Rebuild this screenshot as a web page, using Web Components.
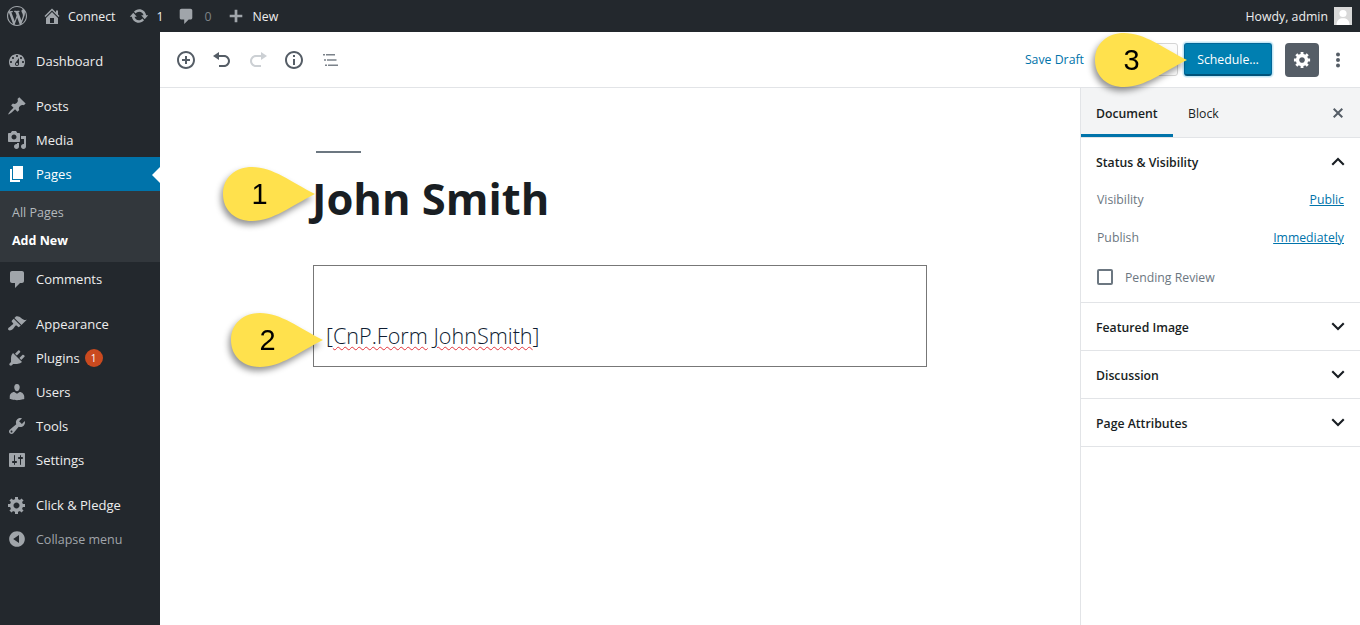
<!DOCTYPE html>
<html lang="en"><head><meta charset="utf-8"><title>Edit Page</title>
<style>
html,body{margin:0;height:625px;overflow:hidden;background:#fff;font-family:"Open Sans","Noto Sans",sans-serif}
#app{display:grid;grid-template-columns:160px 1fr;grid-template-rows:32px 1fr;height:625px;position:relative}
wp-adminbar{grid-column:1/3}
</style></head><body>
<div id="app">
<wp-adminbar></wp-adminbar>
<wp-sidemenu></wp-sidemenu>
<wp-editor></wp-editor>
<wp-callout n="1" style="left:223px;top:167px"></wp-callout>
<wp-callout n="2" style="left:231px;top:313px"></wp-callout>
<wp-callout n="3" style="left:1095px;top:33px"></wp-callout>
</div>
<script>
const P={
wp:"M20 10c0-5.51-4.49-10-10-10C4.48 0 0 4.49 0 10c0 5.52 4.48 10 10 10 5.51 0 10-4.48 10-10zM7.78 15.37L4.37 6.22c.55-.02 1.17-.08 1.17-.08.5-.06.44-1.13-.06-1.11 0 0-1.45.11-2.37.11-.18 0-.37 0-.58-.01C4.12 2.69 6.87 1.11 10 1.11c2.33 0 4.45.87 6.05 2.34-.68-.11-1.65.39-1.65 1.58 0 .74.45 1.36.9 2.1.35.61.55 1.36.55 2.46 0 1.49-1.4 5-1.4 5l-3.03-8.37c.54-.02.82-.17.82-.17.5-.05.44-1.25-.06-1.22 0 0-1.44.12-2.38.12-.87 0-2.33-.12-2.33-.12-.5-.03-.56 1.2-.06 1.22l.92.08 1.26 3.41zM17.41 10c.24-.64.74-1.87.43-4.25.7 1.29 1.05 2.71 1.05 4.25 0 3.29-1.73 6.24-4.4 7.78.97-2.59 1.94-5.2 2.92-7.78zM6.1 18.09C3.12 16.65 1.11 13.53 1.11 10c0-1.3.23-2.48.72-3.59C3.25 10.3 4.67 14.2 6.1 18.09zm4.03-6.63l2.58 6.98c-.86.29-1.76.45-2.71.45-.79 0-1.57-.11-2.29-.33.81-2.38 1.62-4.74 2.42-7.1z",
home:"M16 8.5l1.53 1.53-1.06 1.06L10 4.62l-6.47 6.47-1.06-1.06L10 2.5l4 4v-2h2v4zm-6-2.46l6 5.99V18H4v-5.97zM12 17v-5H8v5h4z",
update:"M10.2 3.28c3.53 0 6.43 2.61 6.92 6h2.08l-3.5 4-3.5-4h2.32c-.45-1.97-2.21-3.45-4.32-3.45-1.45 0-2.73.71-3.54 1.78L4.95 5.66C6.23 4.2 8.11 3.28 10.2 3.28zm-.4 13.44c-3.52 0-6.43-2.61-6.92-6H.8l3.5-4c1.17 1.33 2.33 2.67 3.5 4H5.48c.45 1.97 2.21 3.45 4.32 3.45 1.45 0 2.73-.71 3.54-1.78l1.71 1.95c-1.28 1.46-3.15 2.38-5.25 2.38z",
comment:"M5 2h10c1.1 0 2 .9 2 2v8c0 1.1-.9 2-2 2h-2l-5 5v-5H5c-1.1 0-2-.9-2-2V4c0-1.1.9-2 2-2z",
plus:"M17 8.5v3h-5.5V17h-3v-5.5H3v-3h5.5V3h3v5.500z",
dashboard:"M3.76 16h12.48c1.1-1.37 1.76-3.11 1.76-5 0-4.42-3.58-8-8-8s-8 3.58-8 8c0 1.89.66 3.63 1.76 5zM10 4c.55 0 1 .45 1 1s-.45 1-1 1-1-.45-1-1 .45-1 1-1zM6 6c.55 0 1 .45 1 1s-.45 1-1 1-1-.45-1-1 .45-1 1-1zm8 0c.55 0 1 .45 1 1s-.45 1-1 1-1-.45-1-1 .45-1 1-1zm-5.37 5.55L12 7v6c0 1.1-.9 2-2 2s-2-.9-2-2c0-.57.24-1.08.63-1.45zM4 10c.55 0 1 .45 1 1s-.45 1-1 1-1-.45-1-1 .45-1 1-1zm12 0c.55 0 1 .45 1 1s-.45 1-1 1-1-.45-1-1 .45-1 1-1zm-5 3c0-.55-.45-1-1-1s-1 .45-1 1 .45 1 1 1 1-.45 1-1z",
pin:"M10.44 3.02l1.82-1.82 6.36 6.35-1.83 1.82c-1.05-.68-2.48-.57-3.41.36l-.75.75c-.92.93-1.04 2.35-.35 3.41l-1.83 1.82-2.41-2.41-2.8 2.79c-.42.42-3.38 2.71-3.8 2.29s1.86-3.39 2.28-3.81l2.79-2.79L4.1 9.36l1.83-1.82c1.05.69 2.48.57 3.4-.36l.75-.75c.93-.92 1.05-2.35.36-3.41z",
media:"M13 11V4c0-.55-.45-1-1-1h-1.67L9 1H5L3.67 3H2c-.55 0-1 .45-1 1v7c0 .55.45 1 1 1h10c.55 0 1-.45 1-1zM7 4.500c1.38 0 2.500 1.120 2.500 2.500S8.380 9.500 7 9.500 4.500 8.380 4.500 7 5.620 4.500 7 4.500zM14 6h5v10.500c0 1.380-1.120 2.500-2.500 2.500S14 17.880 14 16.500s1.120-2.500 2.500-2.500c.17 0 .34.02.5.05V9h-3V6zm-4 8.050V13h2v3.500c0 1.380-1.120 2.500-2.500 2.500S7 17.880 7 16.500 8.120 14 9.500 14c.17 0 .34.02.5.05z",
page:"M6 15V2h10v13H6zm-1 1h8v2H3V5h2v11z",
appearance:"M14.48 11.06L7.41 3.99l1.5-1.5c.5-.56 2.3-.47 3.51.32 1.21.8 1.43 1.28 2.91 2.1 1.18.64 2.45 1.26 4.45.85zm-.71.71L6.7 4.7 4.93 6.47c-.39.39-.39 1.02 0 1.41l1.06 1.06c.39.39.39 1.03 0 1.42-.6.6-1.43 1.11-2.21 1.69-.35.26-.7.53-1.01.84C1.43 13.23.4 14.91 1.53 16.04c1.1 1.1 3.28.12 4.41-1.01.3-.3.57-.66.84-1.01.58-.78 1.09-1.61 1.69-2.21.39-.39 1.02-.39 1.41 0l1.06 1.06c.39.39 1.02.39 1.41 0z",
plugins:"M13.11 4.36L9.87 7.6 8 5.73l3.24-3.24c.35-.34 1.05-.2 1.56.32.52.51.66 1.21.31 1.55zm-8 1.77l.91-1.12 9.01 9.01-1.19.84c-.71.71-2.63 1.16-3.82 1.16H6.14L4.9 17.26c-.59.59-1.54.59-2.12 0-.59-.58-.59-1.53 0-2.12l1.24-1.24v-3.88c0-1.13.4-3.19 1.09-3.89zm7.26 3.97l3.24-3.24c.34-.35 1.04-.21 1.55.31.52.51.66 1.21.31 1.55l-3.24 3.25z",
users:"M10 9.25c-2.27 0-2.73-3.44-2.73-3.44C7 4.02 7.82 2 9.97 2c2.16 0 2.98 2.02 2.71 3.81 0 0-.41 3.44-2.68 3.44zm0 2.57L12.72 10c2.39 0 4.52 2.33 4.52 4.53v2.49s-3.65 1.13-7.24 1.13c-3.65 0-7.24-1.13-7.24-1.13v-2.49c0-2.25 1.94-4.48 4.47-4.48z",
tools:"M16.68 9.77c-1.34 1.34-3.3 1.67-4.95.99l-5.41 6.52c-.99.99-2.59.99-3.58 0s-.99-2.59 0-3.57l6.52-5.42c-.68-1.65-.35-3.61.99-4.95 1.28-1.28 3.12-1.62 4.72-1.06l-2.89 2.89 2.82 2.82 2.86-2.87c.53 1.58.18 3.39-1.08 4.65zM3.81 16.21c.4.39 1.04.39 1.43 0 .4-.4.4-1.04 0-1.43-.39-.4-1.03-.4-1.43 0-.39.39-.39 1.03 0 1.43z",
settings:"M18 16V4c0-.55-.45-1-1-1H3c-.55 0-1 .45-1 1v12c0 .55.45 1 1 1h14c.55 0 1-.45 1-1zM8 11h1c.55 0 1 .45 1 1s-.45 1-1 1H8v1.5c0 .28-.22.5-.5.5s-.5-.22-.5-.5V13H6c-.55 0-1-.45-1-1s.45-1 1-1h1V5.5c0-.28.22-.5.5-.5s.5.22.5.5V11zm5-2h-1c-.55 0-1-.45-1-1s.45-1 1-1h1V5.5c0-.28.22-.5.5-.5s.5.22.5.5V7h1c.55 0 1 .45 1 1s-.45 1-1 1h-1v5.5c0 .28-.22.5-.5.5s-.5-.22-.5-.5V9z",
gear:"M18 12h-2.18c-.17.7-.44 1.35-.81 1.93l1.54 1.54-2.1 2.1-1.54-1.54c-.58.36-1.23.63-1.91.79V19H8v-2.18c-.68-.16-1.33-.43-1.91-.79l-1.54 1.54-2.12-2.12 1.54-1.54c-.36-.58-.63-1.23-.79-1.91H1V9.03h2.17c.16-.7.44-1.35.8-1.94L2.43 5.55l2.1-2.1 1.54 1.54c.58-.37 1.24-.64 1.93-.81V2h3v2.18c.68.16 1.33.43 1.91.79l1.54-1.54 2.12 2.12-1.54 1.54c.36.59.64 1.24.8 1.94H18V12zm-8.5 1.5c1.66 0 3-1.34 3-3s-1.34-3-3-3-3 1.34-3 3 1.34 3 3 3z",
collapse:"M10 2.16c4.33 0 7.84 3.51 7.84 7.84s-3.51 7.84-7.84 7.84S2.16 14.33 2.16 10 5.71 2.16 10 2.16zm2 11.72V6.12L6.18 9.97z",
insert:"M10 1c-5 0-9 4-9 9s4 9 9 9 9-4 9-9-4-9-9-9zm0 16c-3.9 0-7-3.1-7-7s3.1-7 7-7 7 3.1 7 7-3.1 7-7 7zm1-11H9v3H6v2h3v3h2v-3h3V9h-3V6z",
undo:"M12 5H7V2L1 6l6 4V7h5c2.2 0 4 1.8 4 4s-1.8 4-4 4H7v2h5c3.3 0 6-2.7 6-6s-2.7-6-6-6z",
redo:"M8 5h5V2l6 4-6 4V7H8c-2.2 0-4 1.8-4 4s1.8 4 4 4h5v2H8c-3.3 0-6-2.7-6-6s2.7-6 6-6z",
info:"M10 1c-5 0-9 4-9 9s4 9 9 9 9-4 9-9-4-9-9-9zm0 16c-3.9 0-7-3.1-7-7s3.1-7 7-7 7 3.1 7 7-3.1 7-7 7zM9 9h2v6H9zm0-4h2v2H9z",
toc:"M3 4h2v1.600H3zM6 4h9v1.600H6zM4 9.200h2v1.600H4zM7 9.200h9.500v1.600H7zM5 14.400h2v1.600H5zM8 14.400h10v1.600H8z",
close:"M15 6.4L13.6 5 10 8.6 6.4 5 5 6.4 8.6 10 5 13.6 6.4 15 10 11.4 13.6 15 15 13.600 11.400 10z",
up:"M5 13.500l-1.500-1.500L10 5.500l6.500 6.500-1.500 1.500-5-5z",
down:"M5 5.500L3.500 7l6.500 6.500L16.500 7 15 5.500l-5 5z",
dots:"M10 2.500a2 2 0 1 1 0 4 2 2 0 0 1 0-4zm0 5.500a2 2 0 1 1 0 4 2 2 0 0 1 0-4zm0 5.500a2 2 0 1 1 0 4 2 2 0 0 1 0-4z"
};
const ic=(n,s=20,c="currentColor")=>`<svg width="${s}" height="${s}" viewBox="0 0 20 20" fill="${c}" style="display:block;flex:none"><path d="${P[n]}"/></svg>`;
const FONT=`"Open Sans","Noto Sans",sans-serif`;
function def(tag,html){customElements.define(tag,class extends HTMLElement{constructor(){super();const r=this.attachShadow({mode:"open"});if(typeof html!=="function")r.innerHTML=html;}connectedCallback(){if(typeof html==="function")this.shadowRoot.innerHTML=html(this);}});}

def("wp-adminbar",`<style>
:host{display:flex;align-items:center;height:32px;background:#23282d;color:#eee;font:12.300px/30px ${FONT};padding-right:8px;box-sizing:border-box}
.i{display:flex;align-items:center;color:#a0a5aa}
.t,.dim{padding-top:2px}
.t{color:#eee}.dim{color:#7d8286}
.av{width:18px;height:18px;background:#d8d8d8;margin-left:6px;overflow:hidden}
.sp{flex:1}
</style>
<div class="i" style="margin-left:7px">${ic("wp",20)}</div>
<div class="i" style="margin-left:15px">${ic("home",20)}</div><span class="t" style="margin-left:6px">Connect</span>
<div class="i" style="margin-left:14px">${ic("update",20)}</div><span class="t" style="margin-left:7px">1</span>
<div class="i" style="margin-left:14px">${ic("comment",18)}</div><span class="dim" style="margin-left:9px">0</span>
<div class="i" style="margin-left:16px">${ic("plus",18)}</div><span class="t" style="margin-left:7px">New</span>
<span class="sp"></span><span class="t">Howdy, admin</span>
<div class="av"><svg width="18" height="18" viewBox="0 0 18 18" style="display:block"><circle cx="9" cy="6.500" r="3.600" fill="#fff"/><path d="M2.500 18c0-5 3-6.800 6.500-6.800s6.500 1.800 6.500 6.800z" fill="#fff"/></svg></div>`);

def("wp-menu-item",h=>{const a=h.hasAttribute("active"),dim=h.hasAttribute("dim"),b=h.getAttribute("badge");return `<style>
:host{display:flex;align-items:center;height:34px;position:relative;background:${a?"#0073aa":"transparent"};color:${a?"#fff":dim?"#a0a5aa":"#eee"};font:${dim?"12.500px":"13px"}/18px ${FONT};margin-top:${h.hasAttribute("sep")?"11px":"0"}}
.ic{width:36px;padding-left:7px;box-sizing:border-box;color:${a?"#fff":"#a0a5aa"};flex:none}
.tx{${dim?"padding-top:1px":""}}
.b{display:inline-flex;width:18px;height:18px;border-radius:50%;background:#ca4a1f;color:#fff;font-size:10px;line-height:18px;justify-content:center;margin-left:5px}
.ar{position:absolute;right:0;top:10px;border:8px solid transparent;border-right-color:#fff;border-left:0}
</style><div class="ic">${ic(h.getAttribute("icon"),20)}</div><span class="tx"><slot></slot></span>${b?`<span class="b">${b}</span>`:""}${a?'<i class="ar"></i>':""}`});

def("wp-submenu",`<style>
:host{display:flex;flex-direction:column;background:#32373c;height:71px;box-sizing:border-box;padding:8px 0 0 12px;font:12.500px/28px ${FONT};color:#b4b9be}
.on{color:#fff;font-weight:700}
</style><span>All Pages</span><span class="on">Add New</span>`);

def("wp-sidemenu",`<style>:host{display:block;background:#23282d;padding-top:12px}</style><slot></slot>`);
document.querySelector("wp-sidemenu").innerHTML=[
["dashboard","Dashboard"],["pin","Posts",1],["media","Media"],["page","Pages",0,"active"],"sub",["comment","Comments"],["appearance","Appearance",1],["plugins","Plugins",0,'badge="1"'],["users","Users"],["tools","Tools"],["settings","Settings"],["gear","Click &amp; Pledge",1],["collapse","Collapse menu",0,"dim"]
].map(x=>x==="sub"?"<wp-submenu></wp-submenu>":`<wp-menu-item icon="${x[0]}" ${x[2]?"sep":""} ${x[3]||""}>${x[1]}</wp-menu-item>`).join("");

def("wp-toolbar",`<style>
:host{display:flex;align-items:center;height:56px;box-sizing:border-box;border-bottom:1px solid #e2e4e7;background:#fff;padding-left:8px;padding-right:12px;font:12.300px ${FONT}}
.b{width:36px;height:36px;display:flex;align-items:center;justify-content:center;color:#555d66}
.off{color:#ccd0d4}
.lt{color:#7b828a}
.sp{flex:1}
.save{color:#0073aa;margin-right:44px}
.prev{width:50px;height:33px;box-sizing:border-box;border:1px solid #d5d5d5;border-radius:3px;background:#fbfbfb;margin-right:6px}
.pub{width:88px;height:33px;box-sizing:border-box;background:#007fb1;border:1px solid #006799;border-bottom:2px solid #00537a;border-radius:3px;color:#fff;display:flex;align-items:center;justify-content:center;box-shadow:0 0 0 1px #c3e6f4,0 0 0 2px #e2f3fa;margin-right:13px}
.gear{width:34px;height:34px;border-radius:4px;background:#555d66;color:#fff;display:flex;align-items:center;justify-content:center}
.dots{margin-left:9px;width:20px;color:#555d66}
</style>
<div class="b">${ic("insert",20)}</div><div class="b">${ic("undo",20)}</div><div class="b off">${ic("redo",20)}</div><div class="b">${ic("info",20)}</div><div class="b lt">${ic("toc",20)}</div>
<span class="sp"></span><span class="save">Save Draft</span><div class="prev"></div><div class="pub">Schedule…</div><div class="gear">${ic("gear",19)}</div><div class="dots">${ic("dots",20)}</div>`);

def("wp-content",`<style>
:host{display:block;flex:1;background:#fff;color:#191e23}
.sep{width:45px;height:2px;background:#6c7781;margin:63px 0 0 156px}
h1{margin:13px 0 0 152px;font:700 43.500px/66px ${FONT};color:#191e23}
.box{margin:33px 0 0 153px;width:614px;height:102px;box-sizing:border-box;border:1px solid #777;padding:0 12px 16px;display:flex;align-items:flex-end;font:300 21.600px/28px ${FONT};color:#0f1d33}
u{text-decoration:underline wavy #e2343b 1px;text-underline-offset:2px}
</style><div class="sep"></div><h1>John Smith</h1><div class="box"><span>[<u>CnP.Form</u> <u>JohnSmith</u>]</span></div>`);

def("wp-panel",h=>{const open=h.hasAttribute("open");return `<style>
:host{display:block;border-bottom:1px solid #e2e4e7;font:12.250px ${FONT};color:#191e23}
.h{box-sizing:border-box;height:${open?"42px":"47px"};${open?"padding-top:6px;":""}display:flex;align-items:center;justify-content:space-between;padding-left:15px;padding-right:12px;font-weight:600}
.h span{${open?"":"padding-top:2px"}}
.h svg{color:#191e23}
</style><div class="h"><span>${h.getAttribute("title")}</span>${ic(open?"up":"down",20)}</div><slot></slot>`});

def("wp-row",`<style>
:host{display:flex;justify-content:space-between;height:38px;align-items:center;padding:0 16px;font:12.250px ${FONT};color:#6c7781}
::slotted(a){color:#0073aa;text-decoration:underline}
</style><slot></slot>`);

def("wp-check",`<style>
:host{display:flex;align-items:center;height:28px;margin-top:7px;padding:0 16px 11px;font:12.250px ${FONT};color:#6c7781;box-sizing:content-box}
i{width:16px;height:16px;border:2px solid #6c7781;border-radius:2px;box-sizing:border-box;margin-right:12px;display:block}
</style><i></i><slot></slot>`);

def("wp-docside",`<style>
:host{display:block;width:280px;box-sizing:border-box;border-left:1px solid #e2e4e7;background:#fff;font:12.250px ${FONT}}
.tabs{height:50px;box-sizing:border-box;background:#f3f4f5;border-bottom:1px solid #e2e4e7;display:flex;align-items:center;color:#191e23;position:relative}
.tab{height:49px;box-sizing:border-box;display:flex;align-items:center;padding:2px 15px 0}
.on{width:92px;font-weight:600;border-bottom:3px solid #0073aa;padding-top:5px}
.sp{flex:1}.x{margin-right:12px;color:#555d66}
</style><div class="tabs"><div class="tab on">Document</div><div class="tab">Block</div><span class="sp"></span><div class="x">${ic("close",20)}</div></div><slot></slot>`);

def("wp-editor",`<style>
:host{display:flex;flex-direction:column;min-width:0}
.m{display:flex;flex:1;min-height:0}
</style><wp-toolbar></wp-toolbar><div class="m"><wp-content></wp-content><slot></slot></div>`);
document.querySelector("wp-editor").innerHTML=`<wp-docside>
<wp-panel title="Status &amp; Visibility" open><wp-row><span>Visibility</span><a>Public</a></wp-row><wp-row><span>Publish</span><a>Immediately</a></wp-row><wp-check>Pending Review</wp-check></wp-panel>
<wp-panel title="Featured Image"></wp-panel><wp-panel title="Discussion"></wp-panel><wp-panel title="Page Attributes"></wp-panel></wp-docside>`;

def("wp-callout",h=>`<style>
:host{position:absolute;display:block;width:92px;height:54px;filter:drop-shadow(-2px 4px 3px rgba(0,0,0,.42))}
svg{position:absolute;inset:0;display:block}
span{position:absolute;left:0;width:73px;top:0;text-align:center;font:29px/54px "Liberation Sans",Arial,sans-serif;color:#000}
</style><svg width="92" height="54" viewBox="0 0 92 54"><path d="M0 27C0 10 13 0 29 0 50 0 68 15 92 27 68 39 50 54 29 54 13 54 0 44 0 27Z" fill="#ffe14d"/></svg><span>${h.getAttribute("n")}</span>`);
</script>
</body></html>
